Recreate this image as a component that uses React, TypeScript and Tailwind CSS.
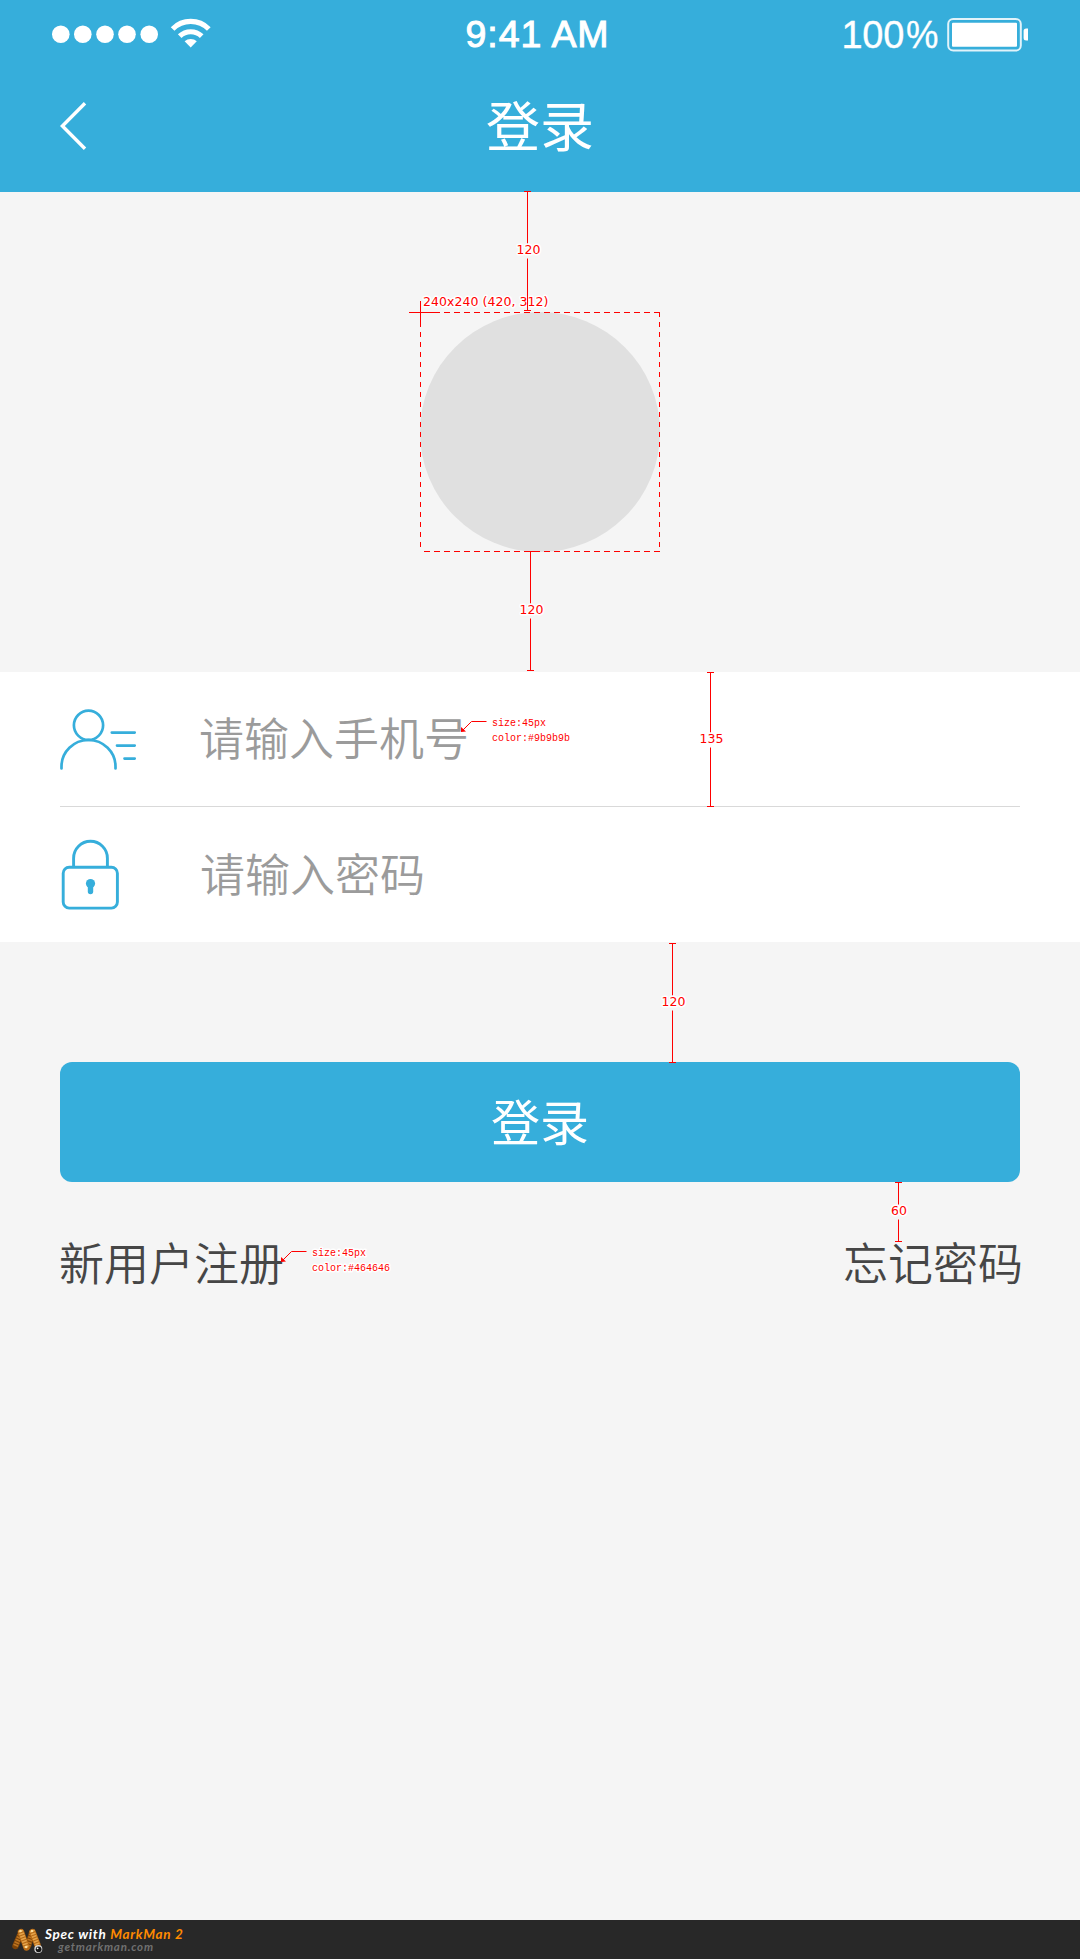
import type { ReactNode } from "react";

const CJK = "font-['Noto_Sans_CJK_SC',sans-serif]";

function StatusBar() {
  return (
    <div className="flex h-[68px] items-center pl-[52px] pr-[52px] text-white">
      <div className="flex flex-1 items-center">
        <svg width="160" height="34" viewBox="0 0 160 34" fill="white">
          {[8.8, 30.8, 53, 75, 97.2].map((x) => (
            <circle key={x} cx={x} cy="17.3" r="8.8" />
          ))}
          <g fill="none" stroke="white">
            <path d="M120.6 12A25.5 25.5 0 0 1 156.8 12" strokeWidth="5.2" />
            <path d="M127.7 19.2A15.8 15.8 0 0 1 149.7 19.2" strokeWidth="5.2" />
          </g>
          <path d="M132.6 24.3A9 9 0 0 1 144.8 24.3L138.7 30.5Z" />
        </svg>
      </div>
      <span className="mt-[2px] mr-[6px] w-[145px] text-right font-['Liberation_Sans',sans-serif] text-[37.5px] leading-none tracking-[0.9px] [-webkit-text-stroke:1px_white] whitespace-nowrap">
        9:41 AM
      </span>
      <div className="flex flex-1 items-center justify-end gap-[9px]">
        <span className="mt-[2px] flex gap-[2px] font-['Liberation_Sans',sans-serif] text-[38px] leading-none tracking-[-0.3px] [-webkit-text-stroke:0.3px_white]">
          <span>100</span>
          <span className="w-[32px] origin-left scale-x-[0.96]">%</span>
        </span>
        <svg width="81" height="36" viewBox="0 0 81 36" className="mt-px">
          <rect x="1.2" y="2" width="72.6" height="31.6" rx="5" fill="none" stroke="white" strokeOpacity="0.85" strokeWidth="2" />
          <rect x="5" y="5.8" width="65" height="24" rx="1" fill="white" />
          <path d="M81 11.5H79.2Q76.6 11.5 76.6 14V21Q76.6 23.5 79.2 23.5H81Z" fill="white" />
        </svg>
      </div>
    </div>
  );
}

function TitleBar() {
  return (
    <div className="flex h-[124px] items-center px-[60px]">
      <button className="w-[120px]" aria-label="返回">
        <svg width="27" height="50" viewBox="0 0 27 50" fill="none" stroke="white" strokeWidth="3.4" className="mt-[-9px]">
          <path d="M25 2.2L2.4 25L25 47.8" />
        </svg>
      </button>
      <h1 className={`${CJK} flex-1 pb-[12px] text-center text-[54px] leading-none text-white`}>登录</h1>
      <div className="w-[120px]" />
    </div>
  );
}

function Field({ icon, text, className }: { icon: ReactNode; text: string; className: string }) {
  return (
    <label className={`mx-[60px] flex h-[135px] items-center ${className}`}>
      {icon}
      <span className={`${CJK} pb-[5px] text-[45px] leading-none font-[350] text-[#9b9b9b]`}>{text}</span>
    </label>
  );
}

function UserIcon() {
  return (
    <svg width="78" height="62" viewBox="0 0 78 62" fill="none" stroke="#36aedb" strokeWidth="2.7" strokeLinecap="round" className="mt-[2px] mr-[61px]">
      <circle cx="28.5" cy="16.3" r="14.6" />
      <path d="M1.5 59.5V57.5A27 26.5 0 0 1 55.5 57.5V59.5" />
      <path d="M51.8 23.6H74.7M57 36.6H74.7M64.5 49.6H74.7" />
    </svg>
  );
}

function LockIcon() {
  return (
    <svg width="62" height="72" viewBox="0 0 62 72" fill="none" stroke="#36aedb" strokeWidth="2.9" className="mt-[-1px] mr-[78px]">
      <rect x="3.2" y="29.3" width="54.2" height="40.8" rx="6" />
      <path d="M13.6 29V20.2A16.9 16.9 0 0 1 47.4 20.2V29" />
      <circle cx="30.5" cy="45.5" r="4.6" fill="#36aedb" stroke="none" />
      <path d="M30.5 46V53.5" strokeWidth="5.4" strokeLinecap="round" />
    </svg>
  );
}

interface Measure {
  x: number;
  top: number;
  bottom: number;
  label: string;
  textX: number;
  textY: number;
}

const measures: Measure[] = [
  { x: 527.5, top: 191.5, bottom: 310.5, label: "120", textX: 516.5, textY: 254 },
  { x: 530.5, top: 551.5, bottom: 670.5, label: "120", textX: 519.5, textY: 614 },
  { x: 710.5, top: 672.5, bottom: 806.5, label: "135", textX: 699.5, textY: 743 },
  { x: 672.5, top: 943.5, bottom: 1062.5, label: "120", textX: 661.5, textY: 1006 },
  { x: 898.5, top: 1182.5, bottom: 1241.5, label: "60", textX: 891, textY: 1215 },
];

const HALO = "fill-[#ff0000] stroke-white stroke-[3px] [paint-order:stroke] [stroke-linejoin:round]";

function Annotations() {
  return (
    <svg width="1080" height="1959" viewBox="0 0 1080 1959" className="pointer-events-none absolute inset-0">
      <g fill="none" stroke="#ff0000">
        <path d="M424 312.5H660" strokeDasharray="6 4" />
        <path d="M424 551.5H660" strokeDasharray="6 4" />
        <path d="M420.5 312V552M659.5 312V552" strokeDasharray="5 5" />
        <path d="M409 312.5H435M420.5 301V327" />
      </g>
      {measures.map((m) => (
        <g key={m.textX + m.label + m.top}>
          <path
            d={`M${m.x - 3.5} ${m.top}h7M${m.x - 3.5} ${m.bottom}h7M${m.x} ${m.top}V${m.textY - 10.5}M${m.x} ${m.textY + 4.5}V${m.bottom}`}
            stroke="#ff0000"
          />
          <text
            x={m.textX}
            y={m.textY}
            textLength={m.label.length === 3 ? 24 : 16}
            className={`${HALO} font-['DejaVu_Sans',sans-serif] text-[12.5px]`}
          >
            {m.label}
          </text>
        </g>
      ))}
      <text x="423" y="306" textLength="125.5" className={`${HALO} font-['DejaVu_Sans',sans-serif] text-[12.5px]`}>
        240x240 (420, 312)
      </text>
      <path d="M527.5 296V310" stroke="#ff0000" />
      <g stroke="#ff0000" fill="none">
        <path d="M486.5 721.5H471.5L463 730" />
        <path d="M461 732V727L466 731.5Z" fill="#ff0000" stroke="none" />
        <path d="M306.5 1251.5H291.5L283 1260" />
        <path d="M281 1262V1257L286 1261.5Z" fill="#ff0000" stroke="none" />
      </g>
      <g className={`${HALO} font-['Liberation_Mono',monospace] text-[11px]`}>
        <text x="492" y="726" textLength="54" lengthAdjust="spacingAndGlyphs">size:45px</text>
        <text x="492" y="741" textLength="78" lengthAdjust="spacingAndGlyphs">color:#9b9b9b</text>
        <text x="312" y="1256" textLength="54" lengthAdjust="spacingAndGlyphs">size:45px</text>
        <text x="312" y="1271" textLength="78" lengthAdjust="spacingAndGlyphs">color:#464646</text>
      </g>
    </svg>
  );
}

function MarkManLogo() {
  return (
    <svg width="34" height="30" viewBox="0 0 34 30" fill="none" strokeLinecap="round">
      <path d="M4.5 21L10 8M17 21L21 8" stroke="#7d4308" strokeWidth="6.5" />
      <path d="M4.5 21L10 8M17 21L21 8" stroke="#bd7420" strokeWidth="5" strokeDasharray="1.6 1.1" strokeLinecap="butt" />
      <path d="M10 7L15.5 22.5M21.5 7L26.5 20" stroke="#b66a16" strokeWidth="6.5" />
      <path d="M9.5 5.5L15.5 22.5M21 5.5L26.5 20" stroke="#e3a24a" strokeWidth="5" strokeDasharray="1.6 1.1" strokeLinecap="butt" />
      <g fill="#ffdf9c">
        <circle cx="9.5" cy="6" r="1.3" />
        <circle cx="21" cy="6" r="1.3" />
        <circle cx="15.2" cy="22" r="1.3" />
      </g>
      <circle cx="27.3" cy="24" r="4" fill="#d8d8d8" />
      <circle cx="27.6" cy="24.3" r="2.9" fill="#161616" />
      <circle cx="26.6" cy="23.3" r="0.9" fill="white" />
    </svg>
  );
}

function Footer() {
  return (
    <footer className="flex h-[39px] items-center bg-[#282828] pl-[11px] font-['Lato',sans-serif] italic">
      <MarkManLogo />
      <div className="flex flex-col whitespace-nowrap">
        <span className="text-[13.5px] leading-[14px] font-bold tracking-[0.7px] text-white">
          Spec with <span className="text-[#ff8a00]">MarkMan 2</span>
        </span>
        <span className="pl-[13px] text-[11.5px] leading-[12px] font-bold tracking-[0.8px] text-[#707070]">getmarkman.com</span>
      </div>
    </footer>
  );
}

export default function App() {
  return (
    <div className="relative flex h-[1959px] w-[1080px] flex-col overflow-hidden bg-[#f5f5f5]">
      <header className="h-[192px] bg-[#36aedb]">
        <StatusBar />
        <TitleBar />
      </header>
      <main className="flex flex-1 flex-col">
        <div className="flex h-[480px] items-center justify-center">
          <div className="size-[240px] rounded-full bg-[#e0e0e0]" />
        </div>
        <div className="h-[270px] bg-white">
          <Field icon={<UserIcon />} text="请输入手机号" className="border-b border-[#d9d9d9]" />
          <Field icon={<LockIcon />} text="请输入密码" className="" />
        </div>
        <div className="mt-[120px] px-[60px]">
          <button className={`${CJK} flex h-[120px] w-full items-center justify-center rounded-[12px] bg-[#36aedb] pb-[5px] text-[49px] leading-none text-white`}>
            登录
          </button>
        </div>
        <div className={`${CJK} mt-[57px] flex justify-between pr-[57px] pl-[59px] text-[45px] leading-none font-[350] text-[#464646]`}>
          <a>新用户注册</a>
          <a>忘记密码</a>
        </div>
      </main>
      <Footer />
      <Annotations />
    </div>
  );
}
